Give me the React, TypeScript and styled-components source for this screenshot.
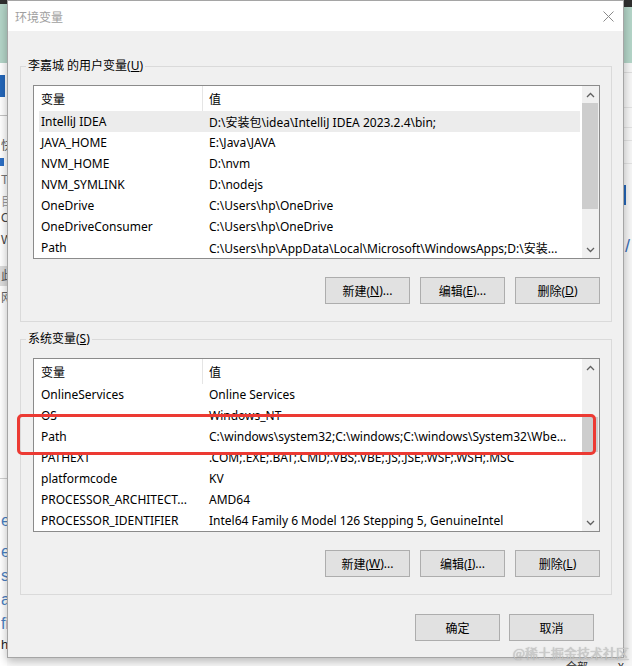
import React from "react";
import styled, { createGlobalStyle } from "styled-components";

const FONT = `"Noto Sans", "Noto Sans CJK SC", sans-serif`;

const Global = createGlobalStyle`
  html, body { margin: 0; padding: 0; }
  body { width: 632px; height: 666px; overflow: hidden; background: #fff; font-family: ${FONT}; }
`;

/* ---------- desktop / backdrop ---------- */
const Desktop = styled.div`
  position: relative;
  width: 632px;
  height: 666px;
  overflow: hidden;
  background: #fff;
  display: flex;
`;

const LeftStrip = styled.div`
  width: 7px;
  flex: none;
  display: flex;
  flex-direction: column;
  overflow: hidden;
  background: #fff;
`;

const MiddleArea = styled.div`
  flex: 1;
  display: flex;
  flex-direction: column;
  justify-content: flex-end;
  background: #fafafa;
`;

const RightStrip = styled.div`
  width: 8px;
  flex: none;
  display: flex;
  flex-direction: column;
  overflow: hidden;
  background: #f6f6f6;
`;

const Band = styled.div<{ $h: number; $bg: string }>`
  height: ${(p) => p.$h}px;
  flex: none;
  background: ${(p) => p.$bg};
`;

const Spacer = styled.div<{ $h: number }>`
  height: ${(p) => p.$h}px;
  flex: none;
`;

const Bar = styled.div<{ $h: number; $w: number; $bg: string }>`
  height: ${(p) => p.$h}px;
  width: ${(p) => p.$w}px;
  flex: none;
  background: ${(p) => p.$bg};
`;

const Frag = styled.div<{ $h: number; $size: number; $color: string; $bg?: string }>`
  height: ${(p) => p.$h}px;
  line-height: ${(p) => p.$h}px;
  flex: none;
  font-size: ${(p) => p.$size}px;
  color: ${(p) => p.$color};
  background: ${(p) => p.$bg || "transparent"};
  white-space: nowrap;
  padding-left: 1px;
  font-family: "Liberation Sans", "Noto Sans CJK SC", sans-serif;
`;

const BottomNote = styled.div`
  height: 7px;
  overflow: hidden;
  display: flex;
  gap: 20px;
  padding-left: 559px;
  font-size: 11px;
  line-height: 14px;
  color: #333;
  font-family: "Noto Sans CJK SC", sans-serif;
`;

/* ---------- dialog window ---------- */
const Window = styled.div`
  position: absolute;
  left: 7px;
  top: 0;
  width: 617px;
  height: 658px;
  box-sizing: border-box;
  background: #f0f0f0;
  border: 1px solid #a5a5a5;
  box-shadow: 0 3px 9px rgba(0, 0, 0, 0.28);
  display: flex;
  flex-direction: column;
  font-family: ${FONT};
  font-size: 12px;
  color: #000;
`;

const TitleBar = styled.div`
  height: 30px;
  flex: none;
  background: #fff;
  display: flex;
  align-items: center;
  justify-content: space-between;
  padding: 0 9px 0 7px;
`;

const TitleText = styled.span`
  color: #a0a0a0;
  font-size: 12px;
  font-family: "Noto Sans CJK SC", sans-serif;
`;

const Body = styled.div`
  flex: 1;
  display: flex;
  flex-direction: column;
  padding: 27px 11px 16px 12px;
`;

const Group = styled.fieldset<{ $gap?: number }>`
  margin: ${(p) => p.$gap || 0}px 0 0 0;
  padding: 11px 11px 17px 12px;
  border: 1px solid #dadada;
  min-width: 0;
`;

const Legend = styled.legend`
  padding: 0 2px;
  margin-left: -7px;
  line-height: 16px;
  font-size: 12px;
  font-family: ${FONT};
`;

const ListBox = styled.div`
  display: flex;
  height: 174px;
  box-sizing: border-box;
  border: 1px solid #8b8b8b;
  background: #fff;
`;

const ListMain = styled.div`
  flex: 1;
  min-width: 0;
  padding: 0 2px 0 5px;
  overflow: hidden;
`;

const HeaderRow = styled.div`
  height: 25px;
  display: flex;
`;

const HeadCell = styled.div<{ $first?: boolean }>`
  box-sizing: border-box;
  height: 100%;
  display: flex;
  align-items: center;
  ${(p) =>
    p.$first
      ? `width: 164px; padding-left: 2px; border-right: 1px solid #e5e5e5;`
      : `flex: 1; padding-left: 6px;`}
`;

const Row = styled.div<{ $sel?: boolean }>`
  height: 21px;
  display: flex;
  align-items: center;
  background: ${(p) => (p.$sel ? "#ececec" : "transparent")};
`;

const Cell = styled.div<{ $first?: boolean }>`
  white-space: nowrap;
  overflow: hidden;
  box-sizing: border-box;
  ${(p) => (p.$first ? `width: 164px; padding-left: 2px;` : `flex: 1; padding-left: 6px;`)}
`;

const ScrollBar = styled.div`
  width: 17px;
  flex: none;
  background: #f0f0f0;
  display: flex;
  flex-direction: column;
`;

const Arrow = styled.div`
  height: 17px;
  flex: none;
  display: flex;
  align-items: center;
  justify-content: center;
`;

const Track = styled.div`
  flex: 1;
  display: flex;
  flex-direction: column;
`;

const Thumb = styled.div<{ $offset: number; $size: number }>`
  margin: ${(p) => p.$offset}px 1px 0 0;
  height: ${(p) => p.$size}px;
  background: #cdcdcd;
`;

const ButtonRow = styled.div<{ $pad?: number; $top: number; $gap: number }>`
  display: flex;
  justify-content: flex-end;
  gap: ${(p) => p.$gap}px;
  margin-top: ${(p) => p.$top}px;
  padding-right: ${(p) => p.$pad || 0}px;
`;

const Btn = styled.button`
  width: 85px;
  height: 27px;
  box-sizing: border-box;
  border: 1px solid #adadad;
  background: #e1e1e1;
  font-family: ${FONT};
  font-size: 12px;
  color: #000;
  padding: 0;
  display: flex;
  align-items: center;
  justify-content: center;
  u {
    text-decoration: underline;
    text-underline-offset: 1px;
  }
`;

/* ---------- overlays ---------- */
const Highlight = styled.div`
  position: absolute;
  left: 17px;
  top: 414px;
  width: 579px;
  height: 41px;
  box-sizing: border-box;
  border: 3px solid #ec3a33;
  border-radius: 5px;
`;

const Watermark = styled.div`
  position: absolute;
  right: 3px;
  top: 646px;
  font-size: 13px;
  line-height: 14px;
  color: rgba(205, 205, 205, 0.95);
  text-shadow: 0 0 1px rgba(90, 90, 90, 0.5);
  font-family: "Noto Sans CJK SC", sans-serif;
  white-space: nowrap;
`;

type VarRow = { name: string; value: string; sel?: boolean };

const userRows: VarRow[] = [
  { name: "IntelliJ IDEA", value: "D:\\安装包\\idea\\IntelliJ IDEA 2023.2.4\\bin;", sel: true },
  { name: "JAVA_HOME", value: "E:\\Java\\JAVA" },
  { name: "NVM_HOME", value: "D:\\nvm" },
  { name: "NVM_SYMLINK", value: "D:\\nodejs" },
  { name: "OneDrive", value: "C:\\Users\\hp\\OneDrive" },
  { name: "OneDriveConsumer", value: "C:\\Users\\hp\\OneDrive" },
  { name: "Path", value: "C:\\Users\\hp\\AppData\\Local\\Microsoft\\WindowsApps;D:\\安装..." },
];

const sysRows: VarRow[] = [
  { name: "OnlineServices", value: "Online Services" },
  { name: "OS", value: "Windows_NT" },
  { name: "Path", value: "C:\\windows\\system32;C:\\windows;C:\\windows\\System32\\Wbe..." },
  { name: "PATHEXT", value: ".COM;.EXE;.BAT;.CMD;.VBS;.VBE;.JS;.JSE;.WSF;.WSH;.MSC" },
  { name: "platformcode", value: "KV" },
  { name: "PROCESSOR_ARCHITECT...", value: "AMD64" },
  { name: "PROCESSOR_IDENTIFIER", value: "Intel64 Family 6 Model 126 Stepping 5, GenuineIntel" },
];

const Chevron = ({ up }: { up?: boolean }) => (
  <svg width="9" height="6" viewBox="0 0 9 6">
    <path
      d={up ? "M1 5 L4.5 1.5 L8 5" : "M1 1 L4.5 4.5 L8 1"}
      stroke="#606060"
      strokeWidth="1.3"
      fill="none"
    />
  </svg>
);

const VarList = ({ rows, offset, size }: { rows: VarRow[]; offset: number; size: number }) => (
  <ListBox>
    <ListMain>
      <HeaderRow>
        <HeadCell $first>变量</HeadCell>
        <HeadCell>值</HeadCell>
      </HeaderRow>
      {rows.map((r, i) => (
        <Row key={i} $sel={r.sel}>
          <Cell $first>{r.name}</Cell>
          <Cell>{r.value}</Cell>
        </Row>
      ))}
    </ListMain>
    <ScrollBar>
      <Arrow>
        <Chevron up />
      </Arrow>
      <Track>
        <Thumb $offset={offset} $size={size} />
      </Track>
      <Arrow>
        <Chevron />
      </Arrow>
    </ScrollBar>
  </ListBox>
);

export default function App() {
  return (
    <>
      <Global />
      <Desktop>
        <LeftStrip>
          <Band $h={4} $bg="#2f2f2f" />
          <Band $h={59} $bg="#b4d5c8" />
          <Spacer $h={12} />
          <Bar $h={22} $w={5} $bg="#2466b8" />
          <Spacer $h={18} />
          <Bar $h={1} $w={7} $bg="#c4c4c4" />
          <Spacer $h={22} />
          <Frag $h={16} $size={12} $color="#555">快</Frag>
          <Spacer $h={4} />
          <Bar $h={8} $w={4} $bg="#2d6fc4" />
          <Spacer $h={6} />
          <Frag $h={16} $size={12} $color="#777">T</Frag>
          <Spacer $h={6} />
          <Frag $h={16} $size={12} $color="#999">目</Frag>
          <Frag $h={16} $size={12} $color="#444">O</Frag>
          <Spacer $h={6} />
          <Frag $h={16} $size={12} $color="#444">W</Frag>
          <Spacer $h={18} />
          <Frag $h={20} $size={12} $color="#555" $bg="#dcdcdc">此</Frag>
          <Spacer $h={4} />
          <Frag $h={16} $size={12} $color="#666">网</Frag>
          <Spacer $h={172} />
          <Bar $h={1} $w={7} $bg="#d0d0d0" />
          <Spacer $h={30} />
          <Frag $h={24} $size={16} $color="#4a7fc1">el</Frag>
          <Spacer $h={7} />
          <Frag $h={24} $size={16} $color="#4a7fc1">eb</Frag>
          <Frag $h={24} $size={16} $color="#4a7fc1">s</Frag>
          <Frag $h={24} $size={16} $color="#4a7fc1">ap</Frag>
          <Frag $h={24} $size={16} $color="#4a7fc1">fi</Frag>
          <Frag $h={18} $size={13} $color="#222">h</Frag>
        </LeftStrip>
        <MiddleArea>
          <BottomNote>
            <span>全部展示</span>
            <span>X</span>
          </BottomNote>
        </MiddleArea>
        <RightStrip>
          <Band $h={7} $bg="#2f2f2f" />
          <Band $h={56} $bg="#b4d5c8" />
          <Spacer $h={9} />
          <Bar $h={1} $w={8} $bg="#dedede" />
          <Spacer $h={34} />
          <Bar $h={1} $w={8} $bg="#e2e2e2" />
          <Spacer $h={19} />
          <Bar $h={1} $w={8} $bg="#e2e2e2" />
          <Spacer $h={12} />
          <Bar $h={1} $w={8} $bg="#e2e2e2" />
          <Spacer $h={22} />
          <Bar $h={1} $w={8} $bg="#e2e2e2" />
          <Spacer $h={21} />
          <Bar $h={20} $w={2} $bg="#2466b8" />
          <Spacer $h={30} />
          <Frag $h={22} $size={18} $color="#3b6fb5">/</Frag>
        </RightStrip>

        <Window>
          <TitleBar>
            <TitleText>环境变量</TitleText>
            <svg width="11" height="11" viewBox="0 0 11 11">
              <path d="M0.5 0.5 L10.5 10.5 M10.5 0.5 L0.5 10.5" stroke="#8a8a8a" strokeWidth="1" />
            </svg>
          </TitleBar>
          <Body>
            <Group>
              <Legend>
                李嘉城 的用户变量(<u>U</u>)
              </Legend>
              <VarList rows={userRows} offset={0} size={106} />
              <ButtonRow $top={18} $gap={10}>
                <Btn>
                  新建(<u>N</u>)...
                </Btn>
                <Btn>
                  编辑(<u>E</u>)...
                </Btn>
                <Btn>
                  删除(<u>D</u>)
                </Btn>
              </ButtonRow>
            </Group>
            <Group $gap={9}>
              <Legend>
                系统变量(<u>S</u>)
              </Legend>
              <VarList rows={sysRows} offset={41} size={35} />
              <ButtonRow $top={18} $gap={10}>
                <Btn>
                  新建(<u>W</u>)...
                </Btn>
                <Btn>
                  编辑(<u>I</u>)...
                </Btn>
                <Btn>
                  删除(<u>L</u>)
                </Btn>
              </ButtonRow>
            </Group>
            <ButtonRow $top={19} $pad={18} $gap={9}>
              <Btn>确定</Btn>
              <Btn>取消</Btn>
            </ButtonRow>
          </Body>
        </Window>

        <Highlight />
        <Watermark>@稀土掘金技术社区</Watermark>
      </Desktop>
    </>
  );
}
